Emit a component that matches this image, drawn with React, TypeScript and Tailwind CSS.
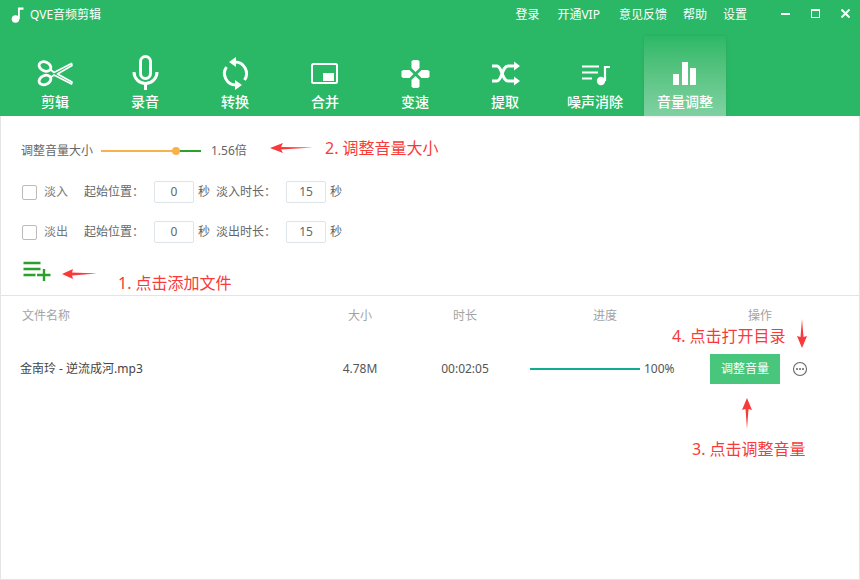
import React from "react";

const font = { fontFamily: '"Noto Sans", "Noto Sans CJK SC", sans-serif' };

const Scissors = () => (
  <svg viewBox="0 0 40 40" className="w-10 h-10" fill="none" stroke="white">
    <ellipse cx="10" cy="13.5" rx="6.2" ry="4.4" transform="rotate(25 10 13.5)" strokeWidth="2.8" />
    <ellipse cx="10" cy="27" rx="6.2" ry="4.4" transform="rotate(-25 10 27)" strokeWidth="2.8" />
    <path d="M15.5 16.5 L19 19.5 L36.5 10.5 L37 12.5 L22.5 21 L37 29 L36.5 31 L19 22 L15.5 24.5" strokeWidth="1.7" strokeLinejoin="round" />
  </svg>
);

const Mic = () => (
  <svg viewBox="0 0 40 40" className="w-10 h-10" fill="none" stroke="white" strokeWidth="3">
    <rect x="15.5" y="3.5" width="10" height="22" rx="5" />
    <path d="M9 19 a11.5 11.5 0 0 0 23 0" />
    <path d="M20.5 30 V37" />
  </svg>
);

const Convert = () => (
  <svg viewBox="0 0 40 40" className="w-10 h-10" fill="none" stroke="white" strokeWidth="3">
    <path d="M20 9 A11.5 11.5 0 0 1 29.5 27" />
    <path d="M21 32 A11.5 11.5 0 0 1 11.5 14" />
    <path d="M21 4 V14 L14 9 Z" fill="white" stroke="none" />
    <path d="M20 27 V37 L27 32 Z" fill="white" stroke="none" />
  </svg>
);

const Merge = () => (
  <svg viewBox="0 0 40 40" className="w-10 h-10" fill="none">
    <rect x="7" y="11" width="25" height="19" rx="1.5" stroke="white" strokeWidth="2" />
    <rect x="18" y="20" width="11" height="8" fill="white" />
  </svg>
);

const speedPiece = "M16.5 8.5 L18 7 H23 L24.5 8.5 V15 L20.5 19 L16.5 15 Z";

const Speed = () => (
  <svg viewBox="0 0 40 40" className="w-10 h-10" fill="white">
    <path d={speedPiece} />
    <path d={speedPiece} transform="rotate(90 20.5 21)" />
    <path d={speedPiece} transform="rotate(180 20.5 21)" />
    <path d={speedPiece} transform="rotate(270 20.5 21)" />
  </svg>
);

const Shuffle = () => (
  <svg viewBox="0 0 40 40" className="w-10 h-10" fill="none" stroke="white" strokeWidth="3">
    <path d="M7 13 H12 C17 13 17 28 23 28 H30" />
    <path d="M7 28 H12 C17 28 17 13 23 13 H30" />
    <path d="M29 8.5 L35 13 L29 17.5 Z" fill="white" stroke="none" />
    <path d="M29 23.5 L35 28 L29 32.5 Z" fill="white" stroke="none" />
  </svg>
);

const Noise = () => (
  <svg viewBox="0 0 40 40" className="w-10 h-10" fill="none" stroke="white" strokeWidth="2">
    <path d="M7 13.5 H24 M7 19.5 H23 M7 25.5 H17" />
    <path d="M30 28 V14 H35" strokeWidth="2.2" />
    <circle cx="26" cy="28" r="4.2" fill="white" stroke="none" />
  </svg>
);

const Bars = () => (
  <svg viewBox="0 0 40 40" className="w-10 h-10" fill="white">
    <rect x="8" y="21" width="6" height="11" />
    <rect x="17" y="9" width="6" height="23" />
    <rect x="25" y="15" width="6" height="17" />
  </svg>
);

const tabs = [
  { label: "剪辑", icon: <Scissors /> },
  { label: "录音", icon: <Mic /> },
  { label: "转换", icon: <Convert /> },
  { label: "合并", icon: <Merge /> },
  { label: "变速", icon: <Speed /> },
  { label: "提取", icon: <Shuffle /> },
  { label: "噪声消除", icon: <Noise /> },
  { label: "音量调整", icon: <Bars />, active: true },
];

function FadeRow({ label, durationLabel }: { label: string; durationLabel: string }) {
  return (
    <div className="flex items-center h-[22px] pl-[21px] text-xs text-[#666]">
      <span className="w-[15px] h-[15px] border border-[#bbb] rounded-[2px] bg-white" />
      <span className="ml-[7px] w-[40px] text-[#777]">{label}</span>
      <span className="w-[70px]">起始位置：</span>
      <span className="w-10 h-[22px] border border-[#dfe4ea] rounded-[2px] flex items-center justify-center">0</span>
      <span className="ml-1 w-[18px]">秒</span>
      <span className="w-[70px]">{durationLabel}</span>
      <span className="w-10 h-[22px] border border-[#dfe4ea] rounded-[2px] flex items-center justify-center">15</span>
      <span className="ml-1">秒</span>
    </div>
  );
}

function Note({ className, children }: { className: string; children: string }) {
  return <div className={`absolute text-base leading-6 text-[#f83a3a] whitespace-nowrap ${className}`}>{children}</div>;
}

export default function App() {
  return (
    <div style={font} className="relative w-[860px] h-[580px] bg-white overflow-hidden flex flex-col">
      <header className="h-[116px] bg-[#2bb866] text-white shrink-0">
        <div className="h-[36px] flex items-start">
          <div className="flex items-center h-[30px] pl-[11px]">
            <svg viewBox="0 0 14 16" className="w-[14px] h-4" fill="white">
              <circle cx="4.5" cy="12" r="3.8" />
              <path d="M7 12 V0.5 H12.5 V2.8 H8.8 V12 Z" />
            </svg>
            <span className="ml-[5px] text-xs">QVE音频剪辑</span>
          </div>
          <nav className="flex items-center h-[30px] ml-auto text-xs">
            <span>登录</span>
            <span className="ml-[18px]">开通VIP</span>
            <span className="ml-[19px]">意见反馈</span>
            <span className="ml-4">帮助</span>
            <span className="ml-4">设置</span>
            <div className="ml-[34px] mr-[10px] mb-[3px] flex items-center gap-[21px]">
              <span className="w-[9px] h-[2px] bg-white" />
              <span className="w-[9px] h-[9px] border border-white border-t-2" />
              <svg viewBox="0 0 9 9" className="w-[9px] h-[9px]" stroke="white" strokeWidth="2">
                <path d="M0.5 0.5 L8.5 8.5 M8.5 0.5 L0.5 8.5" />
              </svg>
            </div>
          </nav>
        </div>
        <div className="flex h-[80px] pl-[14px] gap-2">
          {tabs.map((t) => (
            <div
              key={t.label}
              className={`w-[82px] flex flex-col items-center pt-[17px] ${
                t.active ? "bg-gradient-to-b from-[#2bb866] to-[#7fd1a2] shadow-[0_0_3px_rgba(0,0,0,0.12)]" : ""
              }`}
            >
              {t.icon}
              <span className="text-sm font-medium leading-5 -mt-[1px]">{t.label}</span>
            </div>
          ))}
        </div>
      </header>

      <main className="flex-1 flex flex-col border-x border-b border-[#e4e4e4]">
        <div className="flex items-center h-5 mt-[25px] pl-5 text-xs text-[#666]">
          <span className="w-20">调整音量大小</span>
          <div className="relative w-[100px] h-[2px] bg-[#2ba02b]">
            <div className="h-[2px] w-[75px] bg-[#f9b14b]" />
            <div className="absolute left-[71px] -top-[3px] w-2 h-2 rounded-full bg-[#f9b14b]" />
          </div>
          <span className="ml-[10px]">1.56倍</span>
        </div>
        <div className="mt-[20px]">
          <FadeRow label="淡入" durationLabel="淡入时长：" />
        </div>
        <div className="mt-[18px]">
          <FadeRow label="淡出" durationLabel="淡出时长：" />
        </div>
        <div className="pl-[22px] mt-[18px] h-[21px]">
          <svg viewBox="0 0 28 20" className="w-7 h-5" fill="none" stroke="#2ba02b" strokeWidth="2.4">
            <path d="M0.5 2 H17.5 M0.5 8 H17.5 M0.5 14 H12.5" />
            <path d="M14 14 H27.5 M21 8 V20" />
          </svg>
        </div>
        <div className="mt-[13px] border-t border-[#e4e4e4]" />

        <div className="flex items-center h-[18px] mt-[11px] pl-[21px] text-xs text-[#a3a3a3]">
          <span className="w-[298px]">文件名称</span>
          <span className="w-20 text-center">大小</span>
          <span className="w-20 ml-[25px] text-center">时长</span>
          <span className="w-[150px] ml-[25px] text-center">进度</span>
          <span className="w-40 text-center">操作</span>
        </div>

        <div className="flex items-center h-[30px] mt-[29px] pl-[19px] text-xs text-[#555]">
          <span className="w-[300px] text-[#444]">金南玲 - 逆流成河.mp3</span>
          <span className="w-20 text-center">4.78M</span>
          <span className="w-20 ml-[25px] text-center">00:02:05</span>
          <div className="w-[150px] ml-[25px] flex items-center">
            <div className="w-[110px] h-[2px] bg-[#0ead94]" />
            <span className="ml-1">100%</span>
          </div>
          <button className="ml-[30px] w-[70px] h-[30px] bg-[#48c67c] text-white text-xs">调整音量</button>
          <svg viewBox="0 0 16 16" className="ml-[12px] w-4 h-4" fill="none" stroke="#666">
            <circle cx="8" cy="8" r="6.5" strokeWidth="1.1" />
            <circle cx="5" cy="8" r="1" fill="#666" stroke="none" />
            <circle cx="8" cy="8" r="1" fill="#666" stroke="none" />
            <circle cx="11" cy="8" r="1" fill="#666" stroke="none" />
          </svg>
        </div>
      </main>

      {/* red hints drawn over the window */}
      <Note className="left-[325px] top-[136px]">2. 调整音量大小</Note>
      <Note className="left-[118px] top-[271px]">1. 点击添加文件</Note>
      <Note className="left-[672px] top-[324px]">4. 点击打开目录</Note>
      <Note className="left-[692px] top-[437px]">3. 点击调整音量</Note>

      <svg viewBox="0 0 43 10" className="absolute left-[270px] top-[143px] w-[43px] h-[10px]" fill="#f83a3a">
        <path d="M0 5 L13 0 L11 4 L43 4.5 L11 6.5 L13 10 Z" />
      </svg>
      <svg viewBox="0 0 35 10" className="absolute left-[62px] top-[269px] w-[35px] h-[10px]" fill="#f83a3a">
        <path d="M0 5 L11 0 L10 3.5 L35 4.5 L10 6.5 L11 10 Z" />
      </svg>
      <svg viewBox="0 0 10 29" className="absolute left-[797px] top-[319px] w-[10px] h-[29px]" fill="#f83a3a">
        <path d="M5 29 L0 17 L3.5 18 L5 0 L6.5 18 L10 17 Z" />
      </svg>
      <svg viewBox="0 0 10 31" className="absolute left-[742px] top-[398px] w-[10px] h-[31px]" fill="#f83a3a">
        <path d="M5 0 L0 12 L3.5 11 L5 31 L6.5 11 L10 12 Z" />
      </svg>
    </div>
  );
}
